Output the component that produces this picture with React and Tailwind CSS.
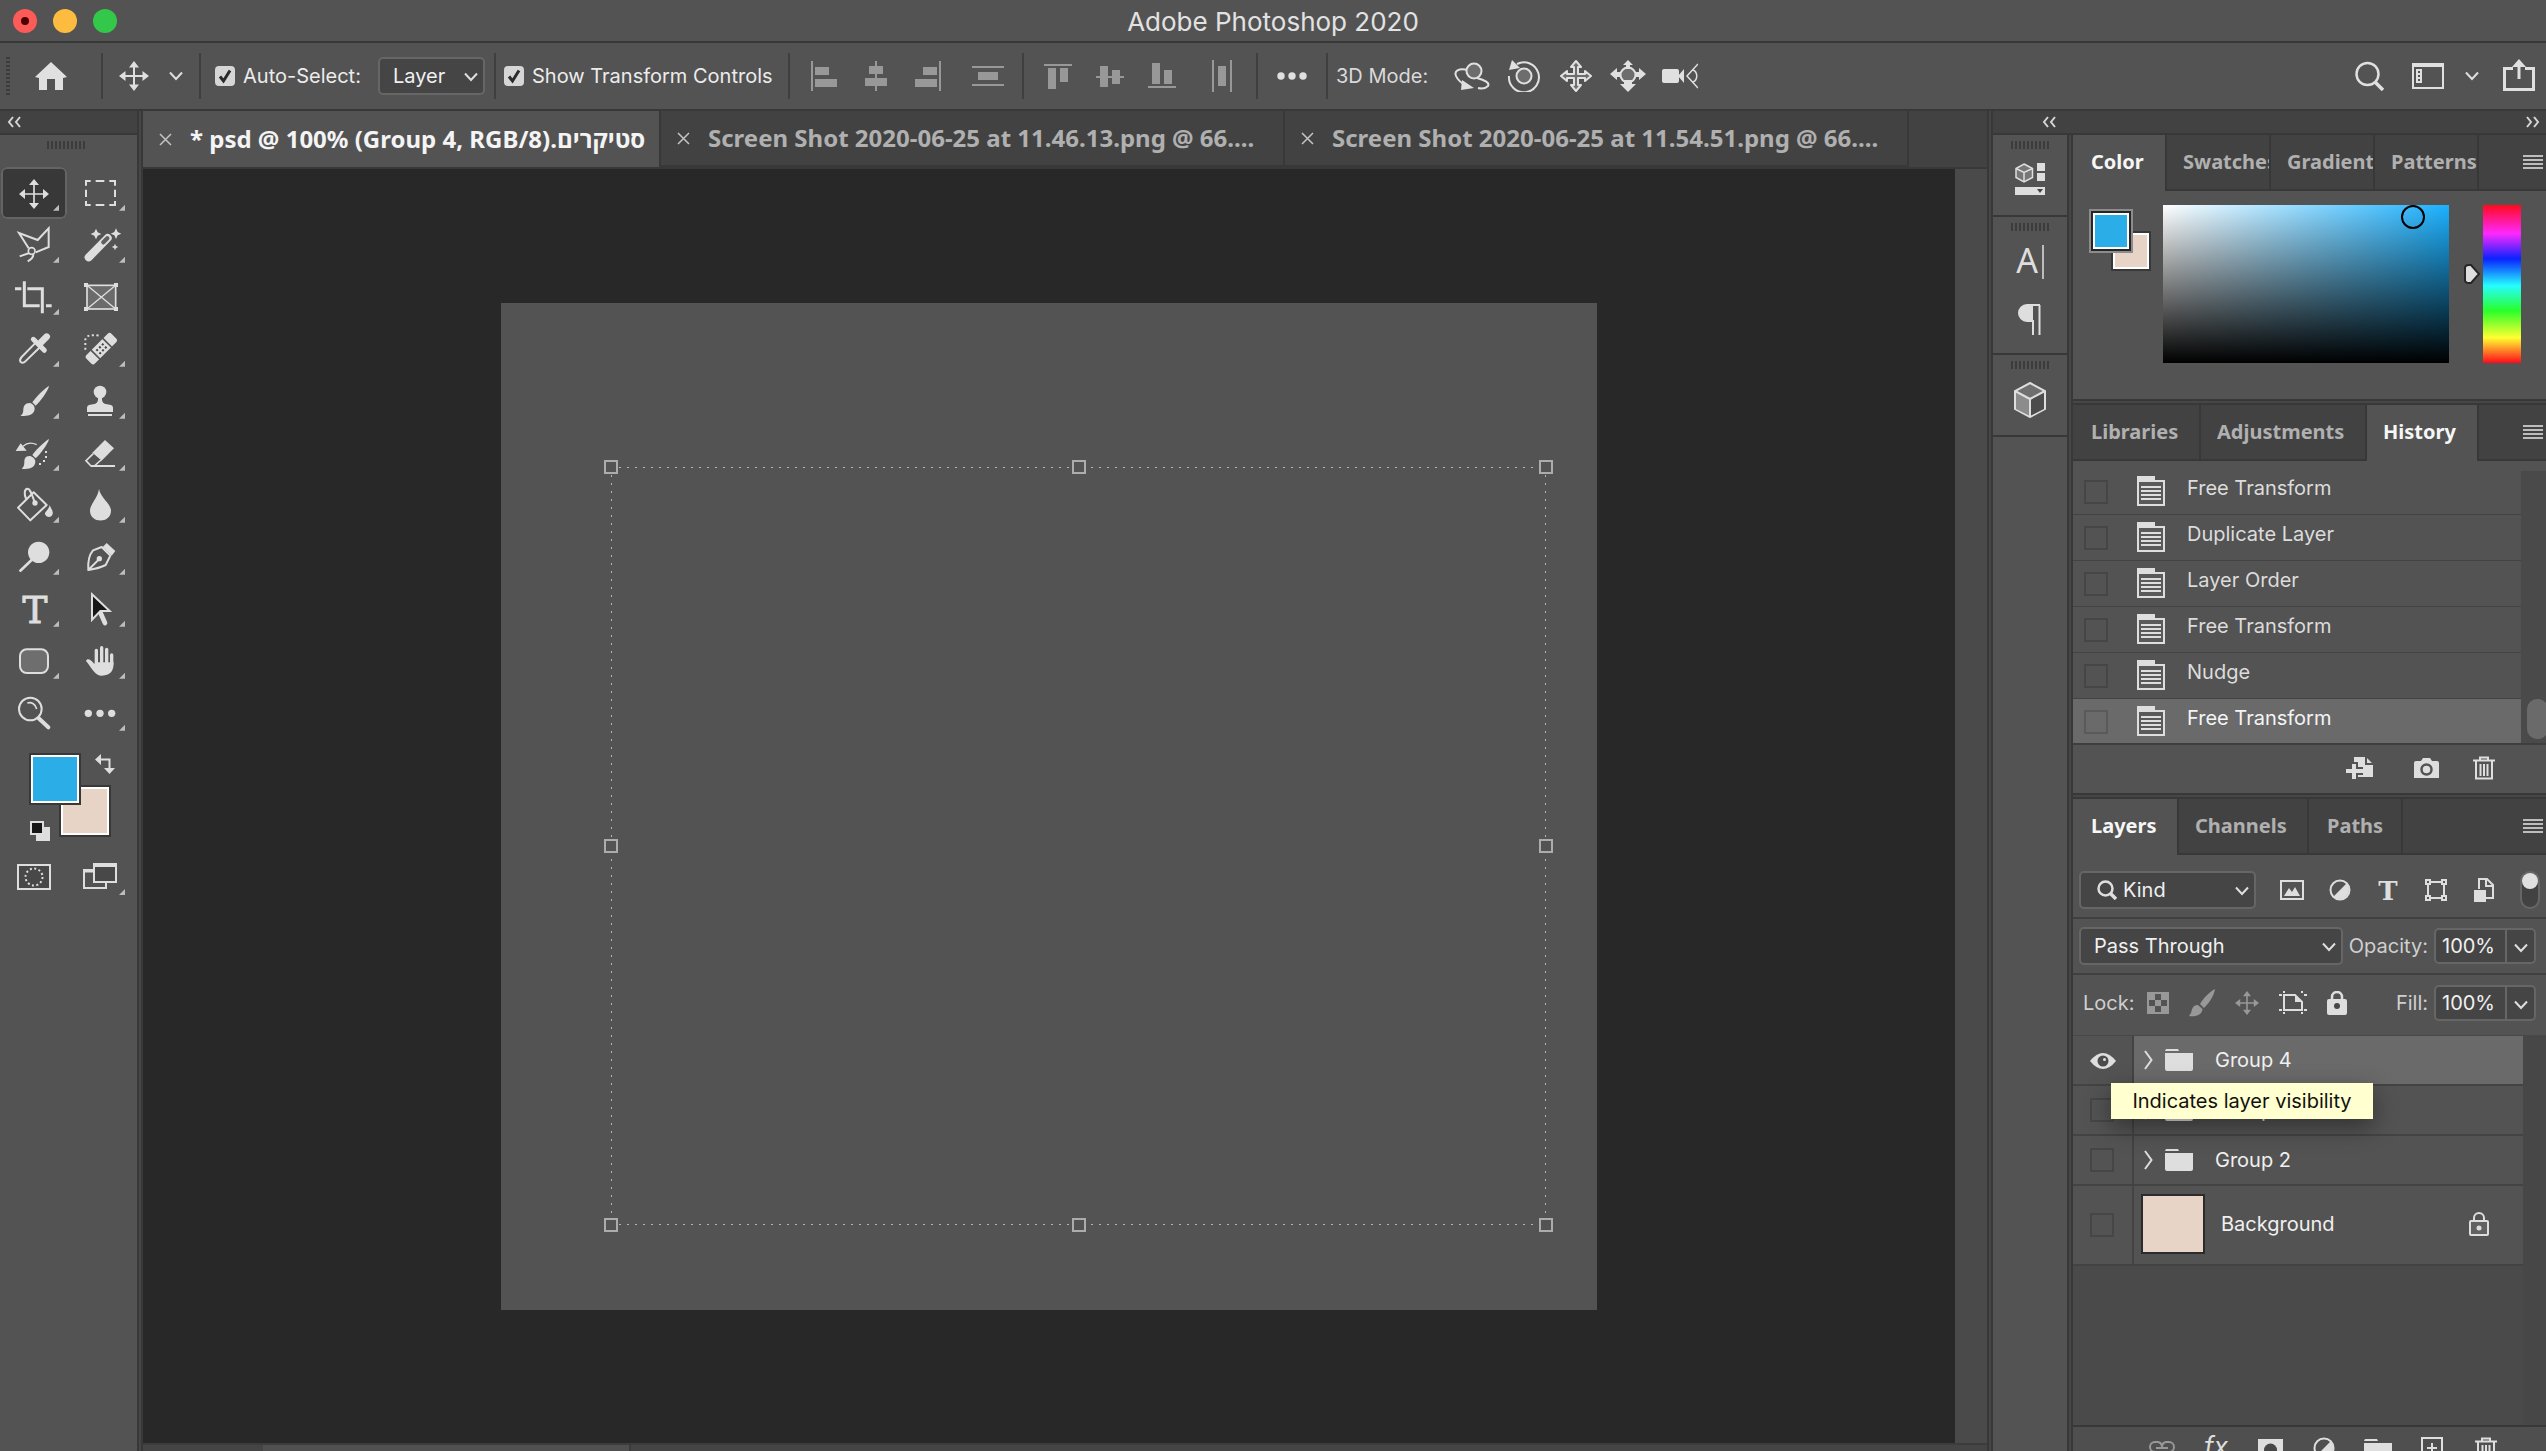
import React from "react";

const UI = "font-['Inter','Liberation_Sans',sans-serif]";
const TAB = "font-['Noto_Sans','Open_Sans','DejaVu_Sans',sans-serif]";

function Svg({ w, h, vb, className = "", children }) {
  return (
    <svg
      width={w}
      height={h}
      viewBox={vb || `0 0 ${w} ${h}`}
      className={`block shrink-0 ${className}`}
      fill="none"
      stroke="none"
      aria-hidden="true"
    >
      {children}
    </svg>
  );
}

function Chevron({ className = "" }) {
  return (
    <Svg w={14} h={10} className={className}>
      <path d="M1 1.5 L7 8 L13 1.5" stroke="#dedede" strokeWidth="2" />
    </Svg>
  );
}

function Double({ right }) {
  return (
    <Svg w={14} h={12}>
      <path
        d={right ? "M1 1 L5 6 L1 11 M8 1 L12 6 L8 11" : "M6 1 L2 6 L6 11 M13 1 L9 6 L13 11"}
        stroke="#d6d6d6"
        strokeWidth="2"
      />
    </Svg>
  );
}

function Grip() {
  return (
    <Svg w={38} h={8}>
      {[0, 4, 8, 12, 16, 20, 24, 28, 32, 36].map((x) => (
        <rect key={x} x={x} width="2" height="8" fill="#3c3c3c" />
      ))}
    </Svg>
  );
}

function Sep() {
  return <div className="h-[46px] w-0.5 shrink-0 bg-[#3f3f3f]" />;
}

function IconButton({ label, className = "", children }) {
  return (
    <button type="button" aria-label={label} className={`flex shrink-0 items-center justify-center ${className}`}>
      {children}
    </button>
  );
}

function MoveGlyph({ size = 30, color = "#e0e0e0" }) {
  return (
    <Svg w={size} h={size} vb="0 0 30 30">
      <path d="M15 4V26M4 15H26" stroke={color} strokeWidth="2" />
      <path d="M15 0l5 6.5h-10zM15 30l5-6.5h-10zM0 15l6.500-5v10zM30 15l-6.500-5v10z" fill={color} />
    </Svg>
  );
}

function Check({ id, label, width }) {
  return (
    <div className="flex items-center gap-2">
      <span className="relative block size-5">
        <input id={id} type="checkbox" defaultChecked className="block size-5 appearance-none rounded-[4px] bg-[#d6d6d6]" />
        <Svg w={20} h={20} className="pointer-events-none absolute inset-0">
          <path d="M5 10.500 L8.500 15 L15 4.500" stroke="#2b2b2b" strokeWidth="3" />
        </Svg>
      </span>
      <label htmlFor={id} className={`text-xl whitespace-nowrap text-[#ececec] ${width}`}>
        {label}
      </label>
    </div>
  );
}

function Dropdown({ label, value, options, className, children }) {
  return (
    <div className={`relative ${className}`}>
      {children}
      <select
        aria-label={label}
        defaultValue={value}
        className={`h-[38px] w-full appearance-none rounded-[5px] border-2 border-[#666] bg-[#454545] text-xl text-[#f0f0f0] outline-none ${
          children ? "pl-[42px]" : "pl-[13px]"
        }`}
      >
        {options.map((o) => (
          <option key={o}>{o}</option>
        ))}
      </select>
      <Chevron className="pointer-events-none absolute top-[15px] right-[7px]" />
    </div>
  );
}

function OptionsBar() {
  const g = "#989898";
  const w = "#e0e0e0";
  return (
    <div className="flex h-[68px] shrink-0 items-center overflow-hidden border-b-2 border-[#383838] bg-[#535353]">
      <Svg w={4} h={38} className="ml-1.5">
        {[0, 4, 8, 12, 16, 20, 24, 28, 32, 36].map((y) => (
          <rect key={y} y={y} width="4" height="2" fill="#3c3c3c" />
        ))}
      </Svg>
      <IconButton label="Home" className="mr-[34px] ml-[25px]">
        <Svg w={32} h={30}>
          <path d="M16 1 L32 16 L28 17 V29 H20 V18 H12 V29 H4 V17 L0 16 Z" fill={w} />
        </Svg>
      </IconButton>
      <Sep />
      <div className="flex items-center gap-5 px-4">
        <IconButton label="Move tool preset"><MoveGlyph /></IconButton>
        <IconButton label="Preset menu"><Chevron /></IconButton>
      </div>
      <Sep />
      <div className="flex items-center pr-[9px] pl-3.5">
        <Check id="auto" label="Auto-Select:" width="w-[120px]" />
        <Dropdown label="Auto-Select target" value="Layer" options={["Group", "Layer"]} className="ml-[15px] w-[107px]" />
      </div>
      <Sep />
      <div className="flex items-center pr-[13px] pl-2">
        <Check id="stc" label="Show Transform Controls" width="w-[243px]" />
      </div>
      <Sep />
      <div className="flex items-center gap-7 pr-[15px] pl-[21px]">
        <IconButton label="Align left edges">
          <Svg w={26} h={30}><path d="M0 0h2v30H0zM4 6h14v8H4zM4 18h22v8H4z" fill={g} /></Svg>
        </IconButton>
        <IconButton label="Align horizontal centers">
          <Svg w={22} h={30}><path d="M10 0h2v30h-2zM4 5h14v8H4zM0 17h22v8H0z" fill={g} /></Svg>
        </IconButton>
        <IconButton label="Align right edges">
          <Svg w={26} h={30}><path d="M24 0h2v30h-2zM8 6h14v8H8zM0 18h22v8H0z" fill={g} /></Svg>
        </IconButton>
        <IconButton label="Distribute vertically">
          <Svg w={38} h={30}><path d="M3 5h32v2H3zM9 11h20v8H9zM3 23h32v2H3z" fill={g} /></Svg>
        </IconButton>
      </div>
      <Sep />
      <div className="flex items-center gap-6 pr-3 pl-5">
        <IconButton label="Align top edges">
          <Svg w={28} h={30}><path d="M0 3h28v2H0zM4 7h8v21H4zM16 7h8v14h-8z" fill={g} /></Svg>
        </IconButton>
        <IconButton label="Align vertical centers">
          <Svg w={28} h={30}><path d="M0 15h28v2H0zM4 5h8v21H4zM16 9h8v14h-8z" fill={g} /></Svg>
        </IconButton>
        <IconButton label="Align bottom edges">
          <Svg w={28} h={30}><path d="M0 25h28v2H0zM4 2h8v21H4zM16 9h8v14h-8z" fill={g} /></Svg>
        </IconButton>
        <IconButton label="Distribute horizontally">
          <Svg w={44} h={32}><path d="M12 0h2v32h-2zM18 6h8v20h-8zM30 0h2v32h-2z" fill={g} /></Svg>
        </IconButton>
      </div>
      <Sep />
      <IconButton label="More options" className="px-[19px]">
        <Svg w={30} h={8}>
          <circle cx="4" cy="4" r="3.700" fill={w} /><circle cx="15" cy="4" r="3.700" fill={w} /><circle cx="26" cy="4" r="3.700" fill={w} />
        </Svg>
      </IconButton>
      <Sep />
      <span className="ml-2 w-[93px] text-xl whitespace-nowrap text-[#dadada]">3D Mode:</span>
      <div className="ml-[25px] flex items-center gap-4">
        <IconButton label="Orbit camera">
          <Svg w={36} h={32}>
            <path d="M14 10C4 8 0 11 2 16C4 21 9 24 13 26M23 18C31 20 36 23 34 26C32 28 28 29 24 28" stroke={w} strokeWidth="2" />
            <circle cx="20" cy="11" r="7.500" fill="#6d6d6d" stroke={w} strokeWidth="2" />
            <path d="M8 20L20 28L7 30Z" fill={w} />
          </Svg>
        </IconButton>
        <IconButton label="Roll camera">
          <Svg w={36} h={32}>
            <path d="M11 4A15 15 0 1 1 3 16" stroke={w} strokeWidth="2" />
            <circle cx="18" cy="16" r="7.500" fill="#6d6d6d" stroke={w} strokeWidth="2" />
            <path d="M6 0L14 8L3 10Z" fill={w} />
          </Svg>
        </IconButton>
        <IconButton label="Pan camera">
          <Svg w={36} h={32}>
            <path d="M18 1l5 6h-3v7h7v-3l6 5-6 5v-3h-7v7h3l-5 6-5-6h3v-7H9v3l-6-5 6-5v3h7V7h-3z" fill="#6d6d6d" stroke={w} strokeWidth="2" strokeLinejoin="round" />
          </Svg>
        </IconButton>
        <IconButton label="Slide camera">
          <Svg w={36} h={32}>
            <circle cx="18" cy="15" r="7.500" fill="#6d6d6d" stroke={w} strokeWidth="2" />
            <path d="M18 0l5 5h-3v4h-4V5h-3zM0 14l7-6v4h4v5H7v3zM36 14l-7-6v4h-4v5h4v3zM18 32l-8-8h4v-4h8v4h4z" fill={w} />
          </Svg>
        </IconButton>
        <IconButton label="Zoom camera">
          <Svg w={36} h={26}>
            <rect y="6" width="17" height="14" rx="2" fill={w} />
            <path d="M16 13L22 6V20Z" fill={w} />
            <path d="M36 1L25 13L36 25M31 7C36 9 36 17 31 19" stroke={w} strokeWidth="1.500" />
          </Svg>
        </IconButton>
      </div>
      <div className="flex-1" />
      <IconButton label="Search">
        <Svg w={30} h={30}>
          <circle cx="12.500" cy="13" r="11" stroke={w} strokeWidth="2.500" />
          <path d="M20 21L28 29" stroke={w} strokeWidth="3.500" />
        </Svg>
      </IconButton>
      <IconButton label="Workspace" className="ml-[27px]">
        <Svg w={32} h={26}>
          <path fillRule="evenodd" d="M0 0h32v26H0zM2 4v20h28V4zM4 6h6v14H4zM6 8v2h2V8zM6 12v2h2v-2zM6 16v2h2v-2z" fill={w} />
        </Svg>
      </IconButton>
      <IconButton label="Workspace menu" className="ml-[21px]"><Chevron /></IconButton>
      <IconButton label="Share" className="mr-[11px] ml-6">
        <Svg w={32} h={34}>
          <path d="M10 9.500H1.500V30.500H30.500V9.500H22" stroke={w} strokeWidth="3" />
          <path d="M16 5V20" stroke={w} strokeWidth="3" />
          <path d="M16 0L23 8H9Z" fill={w} />
        </Svg>
      </IconButton>
    </div>
  );
}

const C = "#dedede";
const Line = (p) => <path stroke={C} strokeWidth="6" {...p} />;
const Fill = (p) => <path fill={C} {...p} />;
const Glyph = (p) => (
  <text fill={C} textAnchor="middle" fontFamily="DejaVu Serif, serif" {...p} />
);

/* Tool drawings use a 198 x 156 grid, three units to the pixel. */
const tools = [
  ["Move", <><Line d="M99 50V112M68 81H130" strokeWidth="5" /><Fill d="M99 36l15 18H84zM99 126l15-18H84zM54 81l18-15v30zM144 81l-18-15v30z" /></>],
  ["Rectangular Marquee", <Line d="M57 56V42H71M86 42H112M127 42H144V56M144 68V90M144 102V114H127M112 114H86M71 114H57V102M57 90V68" />],
  ["Polygonal Lasso", <><Line d="M83 88L54 42L110 63L143 28V84L104 100M85 102L56 112M97 106C97 114 90 122 80 127" /><circle cx="92" cy="96" r="10" stroke={C} strokeWidth="5" /></>],
  ["Magic Wand", <><Line d="M65 115L122 57" strokeWidth="24" strokeLinecap="round" /><path d="M109 70L121 58" stroke="#606060" strokeWidth="13" strokeLinecap="round" /><Fill d="M87 29l5 11 11 5-11 5-5 11-5-11-11-5 11-5zM147 28l5 11 11 5-11 5-5 11-5-11-11-5 11-5zM144 74l3 7 7 3-7 3-3 7-3-7-7-3 7-3z" /></>],
  ["Crop", <Line d="M42 53H61M70 31V104H116M135 104H152M79 53H124V127" strokeWidth="9" />],
  ["Frame", <><rect x="60" y="43" width="86" height="71" fill="#6b6b6b" stroke={C} strokeWidth="5" /><Line d="M60 43L146 114M146 43L60 114" strokeWidth="4" /><Fill d="M51 36h12v12H51zM141 36h12v12h-12zM51 108h12v12H51zM141 108h12v12h-12z" /></>],
  ["Eyedropper", <><path d="M105 58L62 102C57 108 56 112 58 116C62 121 68 120 73 115L118 71" stroke={C} strokeWidth="6" /><Line d="M120 58L137 41" strokeWidth="20" strokeLinecap="round" /><Line d="M97 49L130 82" strokeWidth="15" strokeLinecap="round" /></>],
  ["Healing Brush", <><g transform="rotate(-45 103 77)"><rect x="50" y="59" width="106" height="36" rx="8" fill={C} /><path d="M78 57V97M128 57V97" stroke="#535353" strokeWidth="5" /><path d="M88 68h6v6h-6zM100 68h6v6h-6zM112 68h6v6h-6zM88 81h6v6h-6zM100 81h6v6h-6zM112 81h6v6h-6z" fill="#424242" /></g><path d="M55 80V50C58 38 68 34 96 38" stroke={C} strokeWidth="6" strokeDasharray="6 8" /></>],
  ["Brush", <><Fill d="M144 33C136 36 104 66 94 82L104 92C118 80 142 46 144 33Z" /><Fill d="M88 84C72 83 68 93 67 103C67 114 64 119 58 122C82 125 100 118 101 101C101 92 96 88 88 84Z" /></>],
  ["Clone Stamp", <><circle cx="99" cy="51" r="19" fill={C} /><Fill d="M93 66H105C104 80 108 85 116 87L132 90Q138 92 138 98V111H60V98Q60 92 66 90L82 87C90 85 94 80 93 66ZM63 117H135V123H63Z" /></>],
  ["History Brush", <><Fill d="M44 72L59 49L77 71ZM144 36C136 39 104 69 94 84L104 94C118 82 142 49 144 36ZM88 87C72 86 70 97 70 106C70 116 67 121 62 125C86 128 102 121 103 104C103 95 96 91 88 87ZM132 72h6v6h-6zM132 87h6v6h-6zM126 99h6v6h-6zM114 108h6v6h-6z" /><Line d="M66 58C78 47 94 47 107 53" strokeWidth="4" /></>],
  ["Eraser", <><Fill d="M114 39L141 64L103 102L76 77Z" /><path d="M79 80L57 101L72 117H82L102 99" fill="#535353" stroke={C} strokeWidth="5" /><Line d="M72 117H144" strokeWidth="6" /></>],
  ["Paint Bucket", <><path d="M98 40L137 78L88 124L51 86Z" stroke={C} strokeWidth="6" strokeLinejoin="round" /><path d="M76 61C68 46 70 29 80 29C88 29 92 46 102 72" stroke={C} strokeWidth="6" /><circle cx="102" cy="72" r="8" fill={C} /><Fill d="M146 78C151 91 157 96 155 105C152 117 136 116 132 106C130 98 144 92 146 78Z" /></>],
  ["Blur", <Fill d="M96 30C100 56 132 74 132 95C132 134 69 134 69 95C69 76 92 58 96 30Z" />],
  ["Dodge", <><circle cx="113" cy="64" r="32" fill={C} /><Line d="M95 84L58 119" strokeWidth="8" strokeLinecap="round" /></>],
  ["Pen", <><path d="M64 117C62 88 66 72 78 58L104 48L130 74L116 102C100 110 82 114 64 117ZM64 117L95 86" stroke={C} strokeWidth="6" strokeLinejoin="round" /><circle cx="97" cy="83" r="8" fill={C} /><Fill d="M119 36L145 60L134 74L107 48Z" /></>],
  ["Type", <Glyph x="102" y="120" fontSize="112" stroke={C} strokeWidth="3">T</Glyph>],
  ["Path Selection", <><Line d="M98 84L114 120" strokeWidth="14" strokeLinecap="round" /><path d="M75 34L128 84H100L75 110Z" fill="#161616" stroke={C} strokeWidth="6" /></>],
  ["Rounded Rectangle", <rect x="57" y="43" width="84" height="71" rx="20" fill="#6e6e6e" stroke={C} strokeWidth="6" />],
  ["Hand", <><Fill d="M84 82H140C140 104 134 122 104 122C84 122 78 104 57 78C60 70 68 70 82 87Z" /><Line d="M88 84V46M104 80V38M119 80V43M134 84V60" strokeWidth="10" strokeLinecap="round" /></>],
  ["Zoom", <><circle cx="88" cy="66" r="34" stroke={C} strokeWidth="6" /><Line d="M79 48C92 44 104 52 107 66" strokeWidth="5" /><Line d="M113 94L142 121" strokeWidth="12" strokeLinecap="round" /></>],
  ["Edit Toolbar", <><circle cx="64" cy="79" r="11" fill={C} /><circle cx="99" cy="79" r="11" fill={C} /><circle cx="134" cy="79" r="11" fill={C} /></>],
];

const noFlyout = ["Frame", "Zoom"];

function Toolbar() {
  return (
    <aside aria-label="Tools" className="flex w-[139px] shrink-0 flex-col border-r-2 border-[#383838] bg-[#535353]">
      <div className="flex h-6 shrink-0 items-center border-b-2 border-[#383838] bg-[#424242] pl-[7px]"><Double /></div>
      <div className="flex justify-center py-1.5 pr-1.5"><Grip /></div>
      <div className="mt-3 grid w-[132px] grid-cols-2 gap-0 self-start pl-px">
        {tools.map(([name, art], i) => (
          <button
            key={name}
            type="button"
            aria-label={name + " Tool"}
            className={i === 0 ? "h-[52px] w-[66px] rounded-md bg-[#383838] shadow-[inset_0_0_0_2px_#646464]" : "h-[52px] w-[66px]"}
          >
            <Svg w={66} h={52} vb="0 0 198 156">
              {art}
              {!noFlyout.includes(name) && <path d="M174 113V131H156Z" fill="#bdbdbd" />}
            </Svg>
          </button>
        ))}
      </div>
      <div className="relative mt-3.5 ml-[29px] h-[90px] w-[86px]">
        <button type="button" aria-label="Background color" className="absolute top-8 left-[30px] size-[52px] border-2 border-[#383838] bg-white p-0.5">
          <span className="block size-full bg-[#e7d4c6]" />
        </button>
        <button type="button" aria-label="Foreground color" className="absolute top-0 left-0 size-[52px] border-2 border-[#383838] bg-white p-0.5">
          <span className="block size-full bg-[#2bade8]" />
        </button>
        <button type="button" aria-label="Switch colors" className="absolute top-px right-0">
          <Svg w={20} h={20}>
            <path d="M6 5.500H14.500V14" stroke={C} strokeWidth="2" />
            <path d="M0 5.500L6 0V11ZM14.500 20L9 14H20Z" fill={C} />
          </Svg>
        </button>
        <button type="button" aria-label="Default colors" className="absolute bottom-0.5 left-px">
          <Svg w={20} h={20}>
            <path d="M6 6h14v14H6z" fill={C} />
            <path d="M1 1h12v12H1z" fill="#161616" stroke={C} strokeWidth="2" />
          </Svg>
        </button>
      </div>
      <div className="mt-1.5 grid w-[132px] grid-cols-2 pl-px">
        <button type="button" aria-label="Quick Mask Mode" className="h-[52px] w-[66px]">
          <Svg w={66} h={52}>
            <rect x="17" y="16" width="32" height="24" stroke={C} strokeWidth="2" fill="#484848" />
            <circle cx="33" cy="28" r="8.500" stroke={C} strokeWidth="2" strokeDasharray="2 2.450" />
          </Svg>
        </button>
        <button type="button" aria-label="Screen Mode" className="h-[52px] w-[66px]">
          <Svg w={66} h={52}>
            <path d="M26 21H17V39H39V34" stroke={C} strokeWidth="2" />
            <path d="M17 22H26" stroke={C} strokeWidth="3" />
            <rect x="27" y="15" width="22" height="18" stroke={C} strokeWidth="2" fill="#484848" />
            <path d="M26 16.500H50" stroke={C} strokeWidth="3" />
            <path d="M58 40v6h-6z" fill="#bdbdbd" />
          </Svg>
        </button>
      </div>
    </aside>
  );
}

function Gutter() {
  return <div className="w-1 shrink-0 border-r-2 border-[#383838] bg-[#464646]" />;
}

function DocTab({ title, active, width }) {
  return (
    <div
      className={`flex shrink-0 items-center gap-[18px] border-r-2 border-[#383838] pl-4 ${width} ${
        active ? "bg-[#535353] text-[#f4f4f4]" : "border-b-2 bg-[#424242] text-[#b0b0b0]"
      }`}
    >
      <button type="button" aria-label={"Close " + title}>
        <Svg w={13} h={13}><path d="M1 1L12 12M12 1L1 12" stroke="#c4c4c4" strokeWidth="1.500" /></Svg>
      </button>
      <button type="button" role="tab" aria-selected={!!active} className={`text-2xl font-bold whitespace-nowrap ${TAB}`}>
        {title}
      </button>
    </div>
  );
}

function Handle({ className }) {
  return <span className={`absolute block size-3.5 border-2 border-[#acacac] bg-[#535353] ${className}`} />;
}

function Document() {
  const hDots = "absolute inset-x-0 h-px bg-[repeating-linear-gradient(to_right,#b4b4b4_0_2px,transparent_2px_8px)]";
  const vDots = "absolute inset-y-0 w-px bg-[repeating-linear-gradient(to_bottom,#b4b4b4_0_2px,transparent_2px_8px)]";
  return (
    <main className="flex min-w-0 flex-1 flex-col border-r-2 border-[#383838]">
      <div role="tablist" aria-label="Documents" className="flex h-[58px] shrink-0 overflow-hidden border-b-2 border-[#383838] bg-[#424242]">
        <DocTab active width="w-[518px]" title="* psd @ 100% (Group 4, RGB/8).סטיקרים" />
        <DocTab width="w-[624px]" title="Screen Shot 2020-06-25 at 11.46.13.png @ 66...." />
        <DocTab width="w-[624px]" title="Screen Shot 2020-06-25 at 11.54.51.png @ 66...." />
      </div>
      <div className="flex min-h-0 flex-1">
        <div className="flex min-w-0 flex-1 bg-[#282828] px-[358px] pt-[134px] pb-[133px]">
          <div className="flex flex-1 bg-[#535353] pt-[164px] pr-[51px] pb-[85px] pl-[110px]">
            <div className="relative flex-1">
              <i className={`${hDots} top-0`} />
              <i className={`${hDots} bottom-0`} />
              <i className={`${vDots} left-0`} />
              <i className={`${vDots} right-0`} />
              <Handle className="-top-[7px] -left-[7px]" />
              <Handle className="-top-[7px] left-1/2 -ml-[7px]" />
              <Handle className="-top-[7px] -right-[7px]" />
              <Handle className="top-1/2 -left-[7px] -mt-[7px]" />
              <Handle className="top-1/2 -right-[7px] -mt-[7px]" />
              <Handle className="-bottom-[7px] -left-[7px]" />
              <Handle className="-bottom-[7px] left-1/2 -ml-[7px]" />
              <Handle className="-right-[7px] -bottom-[7px]" />
            </div>
          </div>
        </div>
        <div className="w-8 shrink-0 bg-[#4a4a4a]" />
      </div>
      <div className="flex h-2 shrink-0 border-t-2 border-[#3c3c3c] bg-[#454545]">
        <div className="w-[120px]" />
        <div className="w-[368px] border-r-2 border-[#3c3c3c] bg-[#505050]" />
      </div>
    </main>
  );
}

function DockGroup({ children }) {
  return (
    <div className="flex shrink-0 flex-col items-center border-b-2 border-[#383838] pt-1.5">
      <Grip />
      {children}
    </div>
  );
}

function Dock() {
  return (
    <div className="flex w-[76px] shrink-0 flex-col border-r-2 border-[#383838] bg-[#535353]">
      <DockGroup>
        <IconButton label="Properties" className="h-[66px] pb-1.5">
          <Svg w={30} h={32}>
            <path d="M9 1L17.500 5.500V14.500L9 19L1 14.500V5.500Z" fill="#777" stroke={C} strokeWidth="1.500" />
            <path d="M1 5.500L9 9.500L17.500 5.500M9 9.500V19" stroke={C} strokeWidth="1.500" />
            <path d="M22 0h8v8h-8zM22 10h8v8h-8zM0 24h30v8H0z" fill={C} />
            <path d="M22 26h6l-3 4z" fill="#424242" />
          </Svg>
        </IconButton>
      </DockGroup>
      <DockGroup>
        <IconButton label="Character" className="mt-2 h-12">
          <Svg w={30} h={40}>
            <text x="12" y="30" fontSize="34" textAnchor="middle" fontFamily="Noto Sans, sans-serif" fill={C}>A</text>
            <path d="M28 2V36" stroke={C} strokeWidth="1.500" />
          </Svg>
        </IconButton>
        <IconButton label="Paragraph" className="mt-1.5 mb-1.5 h-[54px]">
          <Svg w={30} h={36}>
            <path d="M25 3H12a8 8 0 0 0 0 16H18V33M24.500 3V33" stroke={C} strokeWidth="2" />
            <path d="M18 3H12a8 8 0 0 0 0 16H18Z" fill={C} />
          </Svg>
        </IconButton>
      </DockGroup>
      <DockGroup>
        <IconButton label="3D" className="h-[66px] pb-2">
          <Svg w={32} h={36} className="mt-1">
            <path d="M16 1L31 9V27L16 35L1 27V9Z" fill="#6f6f6f" stroke={C} strokeWidth="2" />
            <path d="M2 10L16 17.500V34L2 27Z" fill="#8c8c8c" />
            <path d="M30 10L16 17.500V34L30 27Z" fill="#4c4c4c" />
            <path d="M1 9L16 17L31 9M16 17V35" stroke={C} strokeWidth="2" />
          </Svg>
        </IconButton>
      </DockGroup>
    </div>
  );
}

function PanelTabs({ tabs }) {
  return (
    <div role="tablist" className="flex h-14 shrink-0 bg-[#424242]">
      {tabs.map(([name, width, active, pad]) => (
        <button
          key={name}
          type="button"
          role="tab"
          aria-selected={!!active}
          className={`shrink-0 overflow-hidden border-r-2 border-[#383838] text-left text-xl font-bold whitespace-nowrap ${TAB} ${width} ${pad || "pl-[18px]"} ${
            active ? "bg-[#535353] pb-0.5 text-[#f6f6f6]" : "border-b-2 text-[#b0b0b0]"
          }`}
        >
          {name}
        </button>
      ))}
      <div className="flex flex-1 items-center justify-end border-b-2 border-[#383838] pr-[3px]">
        <button type="button" aria-label="Panel menu">
          <Svg w={20} h={14}><path d="M0 1H20M0 5H20M0 9H20M0 13H20" stroke="#bdbdbd" strokeWidth="2" /></Svg>
        </button>
      </div>
    </div>
  );
}

function Divider() {
  return <div className="h-1.5 shrink-0 border-y-2 border-[#383838] bg-[#464646]" />;
}

function ColorPanel() {
  return (
    <section aria-label="Color">
      <PanelTabs
        tabs={[
          ["Color", "w-[94px]", true],
          ["Swatches", "w-[104px]", false, "pl-4"],
          ["Gradients", "w-[104px]", false, "pl-4"],
          ["Patterns", "w-[104px]", false, "pl-4"],
        ]}
      />
      <div className="flex h-[208px] pt-3.5 pr-[25px] pl-4">
        <div className="relative mt-1 h-[62px] w-[62px]">
          <button type="button" aria-label="Background" className="absolute right-0 bottom-0 size-10 border-2 border-[#383838] bg-white p-0.5">
            <span className="block size-full bg-[#e7d4c6]" />
          </button>
          <button type="button" aria-label="Foreground" className="absolute top-0 left-0 size-11 border-2 border-[#8c8c8c] bg-white shadow-[inset_0_0_0_2px_#262626]">
            <span className="m-1 block size-8 bg-[#2bade8]" />
          </button>
        </div>
        <div className="relative ml-3 h-[158px] flex-1 overflow-hidden bg-[linear-gradient(to_top,#000,transparent),linear-gradient(to_right,#fff,#1bb1ff)]">
          <span className="absolute top-0 right-6 size-6 rounded-full border-2 border-black" />
        </div>
        <div className="relative ml-[34px] h-[158px] w-[38px] bg-[linear-gradient(to_bottom,#ff0a1c,#ff28ff_18%,#0a22ff_34%,#26fcff_51%,#2aff2a_67%,#ffff30_84%,#ff0a1c)]">
          <input type="range" aria-label="Hue" defaultValue="56" className="absolute inset-0 size-full opacity-0" />
          <Svg w={18} h={22} className="absolute top-[58px] -left-5">
            <path d="M2 5Q2 2 6 2H8L16 11L8 20H6Q2 20 2 17Z" fill="#dedede" stroke="#262626" strokeWidth="2" />
          </Svg>
        </div>
      </div>
    </section>
  );
}

const history = ["Free Transform", "Duplicate Layer", "Layer Order", "Free Transform", "Nudge", "Free Transform"];

function TrashIcon() {
  return (
    <Svg w={22} h={24}>
      <path d="M0 4.500H22M7 4V1.500H15V4M3 5V22.500H19V5M7.500 8V20M11 8V20M14.500 8V20" stroke={C} strokeWidth="2" />
    </Svg>
  );
}

function HistoryPanel() {
  return (
    <section aria-label="History">
      <PanelTabs
        tabs={[
          ["Libraries", "w-[128px]"],
          ["Adjustments", "w-[166px]", false, "pl-4"],
          ["History", "w-[112px]", true, "pl-4"],
        ]}
      />
      <div className="flex border-b-2 border-[#3e3e3e] pt-2">
        <ul className="flex-1">
          {history.map((h, i) => (
            <li
              key={i}
              className={`flex items-center border-[#434343] pl-[11px] ${
                i === 5 ? "h-11 bg-[#6a6a6a] text-[#f4f4f4]" : "h-[46px] border-b pb-0.5 text-[#dcdcdc]"
              }`}
            >
              <input type="checkbox" aria-label={"History brush source " + (i + 1)} className="mt-0.5 size-6 appearance-none border-2 border-black/15" />
              <Svg w={28} h={30} className="ml-[29px]">
                <path d="M0 0H18V4H28V30H0Z" fill={C} />
                <path d="M2 6H26V28H2Z" fill="#5a5a5a" />
                <path d="M4 11H24M4 15H24M4 19H24M4 23H24" stroke={C} strokeWidth="2" />
              </Svg>
              <button type="button" className="mb-1.5 ml-[22px] text-xl whitespace-nowrap">{h}</button>
            </li>
          ))}
        </ul>
        <div className="mt-0.5 flex w-[25px] items-end justify-end overflow-hidden bg-[#4a4a4a] pb-1">
          <div className="-mr-0.5 h-10 w-[21px] shrink-0 rounded-[10px] bg-[#6a6a6a]" />
        </div>
      </div>
      <div className="flex h-12 items-center justify-end pr-[51px] pb-0.5">
        <IconButton label="New document from state" className="mr-10">
          <Svg w={28} h={22}>
            <path d="M8 0H20L27 7V20H12V8H8Z" fill={C} />
            <path d="M20 0V7H27" stroke="#535353" strokeWidth="2" />
            <path d="M8 5V22M0 14H17" stroke="#535353" strokeWidth="8" />
            <path d="M8 7V22M0 14H17" stroke={C} strokeWidth="4" />
          </Svg>
        </IconButton>
        <IconButton label="New snapshot" className="mr-[34px]">
          <Svg w={25} h={20}>
            <path fillRule="evenodd" d="M0 5Q0 3 2 3H7L9 0H16L18 3H23Q25 3 25 5V20H0Z" fill={C} />
            <circle cx="12.500" cy="11.500" r="5" stroke="#535353" strokeWidth="2.500" />
          </Svg>
        </IconButton>
        <IconButton label="Delete state"><TrashIcon /></IconButton>
      </div>
    </section>
  );
}

function Percent({ label, id }) {
  return (
    <div className="flex items-center gap-1.5">
      <label htmlFor={id} className="text-xl whitespace-nowrap text-[#cfcfcf]">{label}</label>
      <div className="flex h-9 w-[102px] rounded-[5px] border-2 border-[#666] bg-[#454545]">
        <input id={id} defaultValue="100%" className="w-[71px] min-w-0 border-r-2 border-[#666] bg-transparent pl-1.5 text-xl text-[#f0f0f0] outline-none" />
        <button type="button" aria-label={label + " slider"} className="flex flex-1 items-center justify-center pt-1"><Chevron /></button>
      </div>
    </div>
  );
}

function FolderIcon() {
  return (
    <Svg w={28} h={22}>
      <path d="M1 0H13L14 2H0ZM0 4H28V20Q28 22 26 22H2Q0 22 0 20Z" fill={C} />
    </Svg>
  );
}

function LayerRow({ name, visible, selected }) {
  return (
    <li className="flex h-[50px] border-b-2 border-[#434343]">
      <div className="flex w-[61px] items-center border-r-2 border-[#434343] pl-[17px]">
        {visible ? (
          <button type="button" aria-label="Layer visibility" className="pt-0.5">
            <Svg w={26} h={16}>
              <path d="M0 8Q13 -8 26 8Q13 24 0 8Z" fill={C} />
              <circle cx="13" cy="8" r="5.500" fill="#4c4c4c" />
              <circle cx="14.500" cy="6.500" r="1.500" fill={C} />
            </Svg>
          </button>
        ) : (
          <input type="checkbox" aria-label={name + " visibility"} className="size-6 appearance-none border-2 border-black/15" />
        )}
      </div>
      <div className={`flex flex-1 items-center pl-2.5 ${selected ? "bg-[#6a6a6a]" : ""}`}>
        <button type="button" aria-label={"Expand " + name}>
          <Svg w={9} h={20}><path d="M1 1L7.500 10L1 19" stroke={C} strokeWidth="2" /></Svg>
        </button>
        <span className="ml-3"><FolderIcon /></span>
        <button type="button" className="ml-[22px] text-xl whitespace-nowrap text-[#f0f0f0]">{name}</button>
      </div>
    </li>
  );
}

function LayersPanel() {
  const g = "#989898";
  return (
    <section aria-label="Layers" className="flex min-h-0 flex-1 flex-col">
      <PanelTabs
        tabs={[
          ["Layers", "w-[106px]", true],
          ["Channels", "w-[130px]", false, "pl-4"],
          ["Paths", "w-[94px]"],
        ]}
      />
      <div className="flex h-16 shrink-0 items-center gap-6 border-b-2 border-[#404040] pt-2 pr-1.5 pl-1.5">
        <Dropdown label="Filter type" value="Kind" options={["Kind", "Name", "Effect"]} className="w-[177px]">
          <Svg w={20} h={20} className="pointer-events-none absolute top-[9px] left-[18px]">
            <circle cx="8.500" cy="8.500" r="7" stroke={C} strokeWidth="2.500" />
            <path d="M13.500 13.500L19 19" stroke={C} strokeWidth="3.500" />
          </Svg>
        </Dropdown>
        <IconButton label="Filter pixel layers" className="w-6">
          <Svg w={24} h={20}>
            <rect x="1" y="1" width="22" height="18" stroke={C} strokeWidth="2" />
            <path d="M4 16L9 8L12 12L15 7L20 16Z" fill={C} />
          </Svg>
        </IconButton>
        <IconButton label="Filter adjustment layers" className="w-6">
          <Svg w={22} h={22}>
            <circle cx="11" cy="11" r="9.500" stroke={C} strokeWidth="2" />
            <path d="M17.700 4.300A9.500 9.500 0 0 1 4.300 17.700Z" fill={C} />
          </Svg>
        </IconButton>
        <IconButton label="Filter type layers" className="w-6">
          <Svg w={22} h={22}><Glyph x="11" y="21" fontSize="26" fontWeight="bold">T</Glyph></Svg>
        </IconButton>
        <IconButton label="Filter shape layers" className="w-6">
          <Svg w={22} h={22}>
            <path d="M3 3H19V19H3Z" stroke={C} strokeWidth="2" />
            <path d="M1 1h4v4H1zM17 1h4v4h-4zM1 17h4v4H1zM17 17h4v4h-4z" fill="#535353" stroke={C} strokeWidth="2" />
          </Svg>
        </IconButton>
        <IconButton label="Filter smart objects" className="w-6">
          <Svg w={22} h={24}>
            <path d="M6 11V1H14L20 7V20H13" stroke={C} strokeWidth="2" />
            <path d="M13 1V8H20" stroke={C} strokeWidth="2" />
            <path d="M1 12H13V24H1Z" fill={C} />
          </Svg>
        </IconButton>
        <span className="relative block h-[38px] w-5 shrink-0">
          <input type="checkbox" role="switch" aria-label="Layer filtering" className="block h-full w-full appearance-none rounded-full border-2 border-[#666] bg-[#424242]" />
          <span className="pointer-events-none absolute top-0.5 left-0.5 size-4 rounded-full bg-[#e0e0e0]" />
        </span>
      </div>
      <div className="flex h-14 shrink-0 items-center justify-between border-b-2 border-[#404040] pr-2.5 pl-1.5">
        <Dropdown label="Blend mode" value="Pass Through" options={["Pass Through", "Normal", "Multiply"]} className="w-[264px]" />
        <Percent id="opacity" label="Opacity:" />
      </div>
      <div className="flex h-[61px] shrink-0 items-center border-b border-[#484848] pr-2.5 pb-1 pl-2.5">
        <span className="w-16 text-xl text-[#cfcfcf]">Lock:</span>
        <div className="flex flex-1 items-center gap-5">
          <IconButton label="Lock transparent pixels">
            <Svg w={22} h={22}>
              <path d="M0 0H22V22H0Z" fill={g} />
              <path d="M8 2h6v6H8zM2 8h6v6H2zM14 8h6v6h-6zM8 14h6v6H8z" fill="#535353" />
            </Svg>
          </IconButton>
          <IconButton label="Lock image pixels">
            <Svg w={26} h={28}>
              <path d="M26 0C20 3 14 10 11 15L15 19C20 14 25 7 26 0ZM9 16C3 16 3 21 2 24L0 27C7 28 13 26 13.500 20Z" fill={g} />
            </Svg>
          </IconButton>
          <IconButton label="Lock position"><MoveGlyph size={24} color={g} /></IconButton>
          <IconButton label="Lock artboard nesting">
            <Svg w={28} h={24}>
              <path d="M5 4V19H23V11L16 4Z" stroke={C} strokeWidth="2" />
              <path d="M16 4V11H23Z" fill={C} />
              <path d="M0 3h3v2H0zM4 0h2v2H4zM22 0h2v2h-2zM25 3h3v2h-3zM0 18h3v2H0zM4 21h2v2H4zM22 21h2v2h-2zM25 18h3v2h-3z" fill={C} />
            </Svg>
          </IconButton>
          <IconButton label="Lock all">
            <Svg w={20} h={24}>
              <path d="M5 10V6A5 5 0 0 1 15 6V10" stroke={C} strokeWidth="2.500" />
              <rect y="8" width="20" height="16" rx="2" fill={C} />
              <circle cx="10" cy="15" r="3" fill="#484848" />
            </Svg>
          </IconButton>
        </div>
        <Percent id="fill" label="Fill:" />
      </div>
      <div className="flex min-h-0 flex-1 bg-[#4a4a4a]">
        <div className="relative flex-1">
          <ul className="bg-[#535353]">
            <LayerRow name="Group 4" visible selected />
            <LayerRow name="Group 3" />
            <LayerRow name="Group 2" />
            <li className="flex h-20 border-b-2 border-[#434343]">
              <div className="flex w-[61px] items-center border-r-2 border-[#434343] pl-[17px]">
                <input type="checkbox" aria-label="Background visibility" className="size-6 appearance-none border-2 border-black/15" />
              </div>
              <div className="flex flex-1 items-center pr-[34px] pb-0.5 pl-[7px]">
                <div className="h-[60px] w-16 border-2 border-[#2b2b2b] bg-[#e7d4c6]" />
                <button type="button" className="ml-4 flex-1 text-left text-xl text-[#f0f0f0]">Background</button>
                <Svg w={20} h={24}>
                  <path d="M5 9V6A5 5 0 0 1 15 6V9" stroke={C} strokeWidth="2" />
                  <rect x="1" y="9" width="18" height="14" rx="1" fill="#626262" stroke={C} strokeWidth="2" />
                  <circle cx="10" cy="16" r="2.500" fill={C} />
                </Svg>
              </div>
            </li>
          </ul>
          <div
            role="tooltip"
            className="absolute top-[47px] left-[38px] flex h-9 w-[262px] items-center justify-center bg-[#ffffd0] text-xl whitespace-nowrap text-[#111] shadow-[0_8px_24px_rgba(0,0,0,0.4)]"
          >
            Indicates layer visibility
          </div>
        </div>
        <div className="w-[23px] shrink-0 bg-[#474747]" />
      </div>
      <div className="h-[26px] shrink-0 overflow-hidden border-t-2 border-[#383838] bg-[#4f4f4f]">
        <div className="flex items-start gap-[26px] pt-2.5 pl-[75px]">
          <IconButton label="Link layers" className="w-7 pt-1">
            <Svg w={28} h={16}>
              <path d="M12 11H7A5 5 0 0 1 7 1H10Q14 2 14 6M16 11H21A5 5 0 0 0 21 1H18Q14 2 14 6M8 7H20" stroke={g} strokeWidth="2" />
            </Svg>
          </IconButton>
          <IconButton label="Layer style" className="h-5 w-7 text-[26px] leading-5 text-[#dedede]"><i>fx</i></IconButton>
          <IconButton label="Layer mask" className="w-7 pt-0.5">
            <Svg w={25} h={22}><path d="M0 0H25V22H0Z" fill={C} /><circle cx="12.500" cy="11" r="6.500" fill="#484848" /></Svg>
          </IconButton>
          <IconButton label="Adjustment layer" className="w-7">
            <Svg w={22} h={22}><circle cx="11" cy="11" r="9.500" stroke={C} strokeWidth="2" /><path d="M17.700 4.300A9.500 9.500 0 0 1 4.300 17.700Z" fill={C} /></Svg>
          </IconButton>
          <IconButton label="New group" className="w-7 pt-0.5"><FolderIcon /></IconButton>
          <IconButton label="New layer" className="w-7">
            <Svg w={22} h={22}><path d="M1 1H21V21H1ZM11 6V16M6 11H16" stroke={C} strokeWidth="2" /></Svg>
          </IconButton>
          <IconButton label="Delete layer" className="w-7"><TrashIcon /></IconButton>
        </div>
      </div>
    </section>
  );
}

export default function App() {
  return (
    <div className={`flex h-screen w-full flex-col overflow-hidden bg-[#464646] ${UI}`}>
      <header className="flex h-[43px] shrink-0 items-center border-b-2 border-[#383838] bg-[#535353] px-[13px]">
        <div className="flex flex-1 gap-4">
          <button type="button" aria-label="Close window" className="flex size-6 items-center justify-center rounded-full bg-[#fc5b57]">
            <span className="size-2 rounded-full bg-[#4d0000]" />
          </button>
          <button type="button" aria-label="Minimize window" className="size-6 rounded-full bg-[#fdbc40]" />
          <button type="button" aria-label="Zoom window" className="size-6 rounded-full bg-[#34c84a]" />
        </div>
        <h1 className="pt-0.5 text-[26px] leading-10 whitespace-nowrap text-[#e2e2e2]">Adobe Photoshop 2020</h1>
        <div className="flex-1" />
      </header>
      <OptionsBar />
      <div className="flex min-h-0 flex-1">
        <Toolbar />
        <Gutter />
        <Document />
        <Gutter />
        <div className="flex w-[553px] shrink-0 flex-col">
          <div className="flex h-6 shrink-0 items-center border-b-2 border-[#383838] bg-[#424242] pr-1.5">
            <div className="flex w-[63px] justify-end"><Double /></div>
            <div className="flex-1" />
            <Double right />
          </div>
          <div className="flex min-h-0 flex-1">
            <Dock />
            <Gutter />
            <div className="flex min-w-0 flex-1 flex-col bg-[#535353]">
              <ColorPanel />
              <Divider />
              <HistoryPanel />
              <Divider />
              <LayersPanel />
            </div>
          </div>
        </div>
      </div>
    </div>
  );
}
